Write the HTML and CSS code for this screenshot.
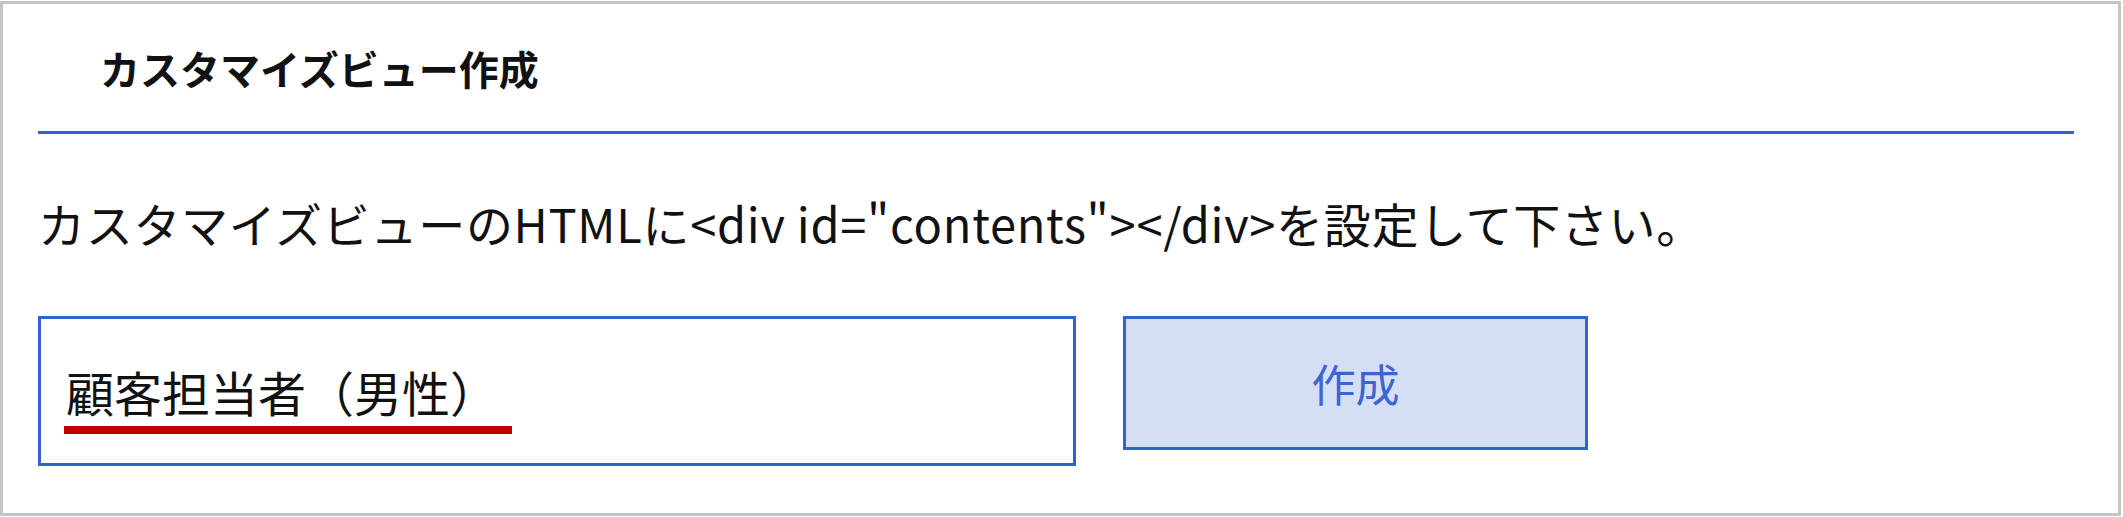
FILE: index.html
```html
<!DOCTYPE html>
<html lang="ja">
<head>
    <meta charset="UTF-8">
    <title>カスタマイズビュー作成</title>
    <link rel="stylesheet" href="styles.css">
</head>
<body>
<div id="panel">
    <div class="head">
        <h1 class="title">カスタマイズビュー作成</h1>
    </div>
    <p class="note">カスタマイズビューのHTMLに&lt;div id="contents"&gt;&lt;/div&gt;を設定して下さい。</p>
    <div class="form-row">
        <div class="name-box">
            <span class="name-text">顧客担当者（男性）</span>
            <span class="mark"></span>
        </div>
        <button class="btn-create" type="button">作成</button>
    </div>
</div>
</body>
</html>
```

FILE: styles.css
```css
*{
    margin:0;
    padding:0;
    box-sizing:border-box;
}
body{
    background:#fff;
    font-family:"Noto Sans CJK JP","Noto Sans",sans-serif;
    color:#111;
}

#panel{
    width:2121px;
    height:515px;
    margin-top:1px;
    border:3px solid #c4c4c4;
}
.head{
    height:130px;
    margin:0 44px 0 35px;
    padding-left:62px;
    border-bottom:3px solid #3062d0;
    display:flex;
    align-items:center;
}
.title{
    font-size:40px;
    font-weight:bold;
    line-height:1;
}

.note{
    margin:59px 0 0 35px;
    font-size:47px;
    letter-spacing:0.7px;
    line-height:60px;
}

.form-row{
    display:flex;
    gap:47px;
    align-items:flex-start;
    margin:63px 0 0 35px;
}
.name-box{
    position:relative;
    width:1038px;
    height:150px;
    border:3px solid #3062d0;
    display:flex;
    align-items:center;
    padding-left:25px;
}
.name-text{
    font-size:48px;
    line-height:1;
}
.mark{
    position:absolute;
    left:23px;
    top:107px;
    width:448px;
    height:8px;
    background:#c00000;
}
.btn-create{
    width:465px;
    height:134px;
    border:3px solid #3062d0;
    background:#d4dff5;
    color:#3d64d2;
    font-family:"Noto Sans CJK JP","Noto Sans",sans-serif;
    font-size:44px;
    cursor:pointer;
}
```
